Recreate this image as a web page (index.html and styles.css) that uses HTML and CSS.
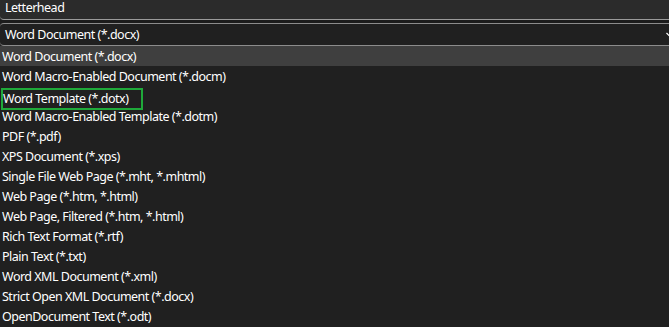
FILE: index.html
```html
<!DOCTYPE html>
<html lang="en">
<head>
    <meta charset="UTF-8">
    <title>Save As Type</title>
    <link rel="stylesheet" href="styles.css">
</head>
<body>
    <div class="name-field">Letterhead</div>
    <div class="gap"></div>
    <div class="type-select">
        <span>Word Document (*.docx)</span>
        <svg class="chevron" width="8" height="6" viewBox="0 0 8 6">
            <path d="M0.5 1 L4 4.5 L7.5 1" fill="none" stroke="#ffffff" stroke-width="1.2"/>
        </svg>
    </div>
    <ul class="type-list">
        <li class="selected">Word Document (*.docx)</li>
        <li>Word Macro-Enabled Document (*.docm)</li>
        <li class="focus-row"><span class="focused">Word Template (*.dotx)</span></li>
        <li>Word Macro-Enabled Template (*.dotm)</li>
        <li>PDF (*.pdf)</li>
        <li>XPS Document (*.xps)</li>
        <li>Single File Web Page (*.mht, *.mhtml)</li>
        <li>Web Page (*.htm, *.html)</li>
        <li>Web Page, Filtered (*.htm, *.html)</li>
        <li>Rich Text Format (*.rtf)</li>
        <li>Plain Text (*.txt)</li>
        <li>Word XML Document (*.xml)</li>
        <li>Strict Open XML Document (*.docx)</li>
        <li>OpenDocument Text (*.odt)</li>
    </ul>
</body>
</html>
```

FILE: styles.css
```css
body {
    margin: 0;
    width: 669px;
    height: 327px;
    overflow: hidden;
    background: #202020;
    color: #ffffff;
    font-family: "Noto Sans", "Open Sans", sans-serif;
    font-size: 12.5px;
    letter-spacing: -0.5px;
}
.name-field {
    height: 19px;
    line-height: 16px;
    padding-left: 5px;
    box-sizing: border-box;
    height: 20px;
    background: #2b2b2b;
    border-bottom: 1px solid #9a9a9a;
    border-bottom-left-radius: 4px;
}
.gap {
    height: 3px;
    background: #1c1c1c;
}
.type-select {
    display: flex;
    align-items: center;
    justify-content: space-between;
    height: 21px;
    padding-left: 5px;
    background: #202020;
    border-top: 1px solid #8c8c8c;
    border-bottom: 1px solid #8c8c8c;
    border-radius: 4px 0 0 4px;
}
.chevron {
    margin-right: -5px;
}
.type-list {
    list-style: none;
    margin: 0;
    padding: 0;
    background: #202020;
}
.type-list li {
    height: 20px;
    line-height: 22px;
    padding-left: 2px;
}
.type-list li.selected {
    background: #3f3f3f;
}
.type-list li.focus-row {
    display: flex;
    align-items: flex-start;
}
.focused {
    box-sizing: border-box;
    width: 142px;
    height: 22px;
    margin-top: 2px;
    margin-left: -1px;
    line-height: 14px;
    padding-top: 2px;
    border: 2px solid #1fa93a;
}
```
